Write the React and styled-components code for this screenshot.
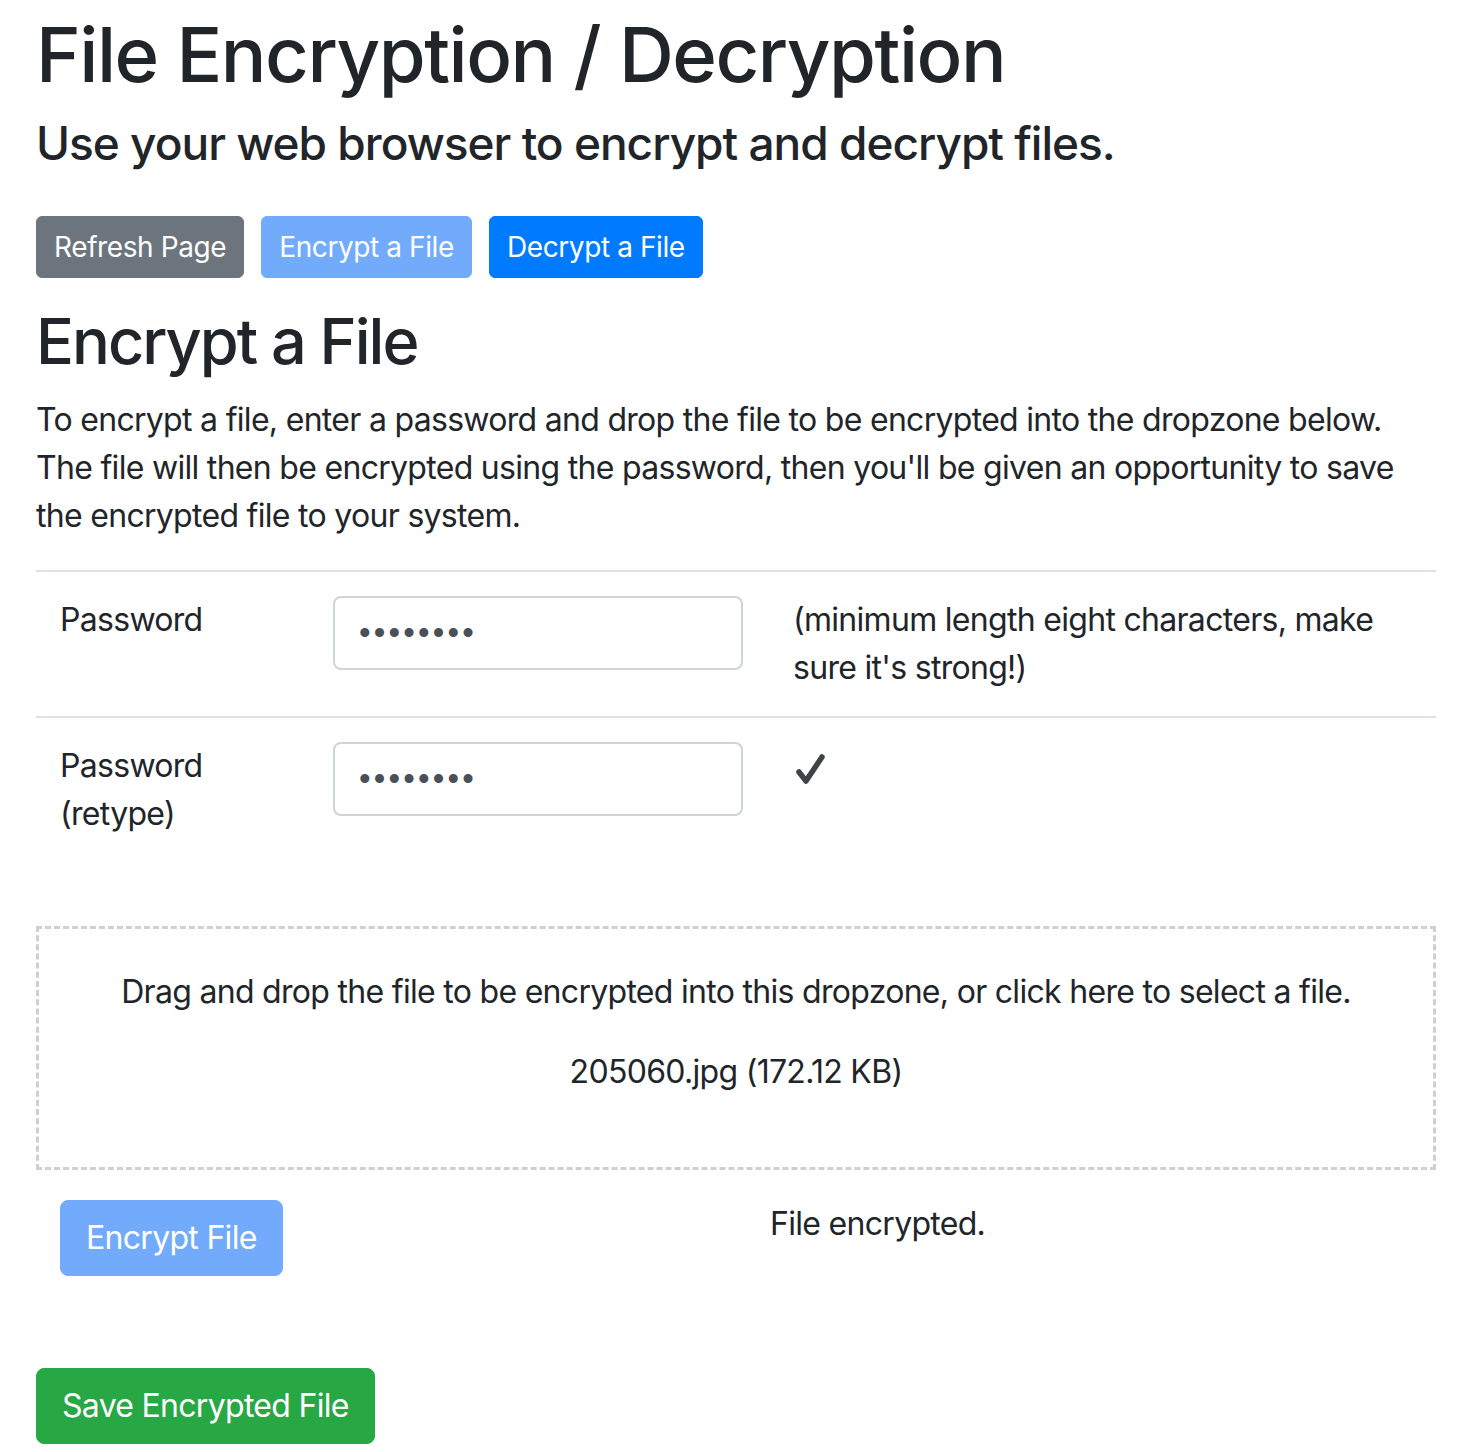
import React from 'react'
import styled, { createGlobalStyle } from 'styled-components'

const GlobalStyle = createGlobalStyle`
  * { box-sizing: border-box; }
  body {
    margin: 0;
    font-family: Inter, "Noto Sans", sans-serif;
    font-size: 32px;
    line-height: 1.5;
    color: #212529;
    background: #fff;
  }
`

const Page = styled.main`
  padding: 9px 48px 8px 36px;
`

const Title = styled.h1`
  margin: 0 0 16px;
  font-size: 76px;
  font-weight: 500;
  line-height: 1.2;
  letter-spacing: -1.5px;
`

const Subtitle = styled.h4`
  margin: 0 0 45px;
  font-size: 46px;
  font-weight: 500;
  line-height: 1.2;
  letter-spacing: -1px;
`

const Toolbar = styled.div`
  display: flex;
  gap: 17px;
  margin-bottom: 26px;
`

const colors = {
  secondary: '#6c757d',
  primary: '#007bff',
  faded: '#72abfb',
  success: '#28a745',
}

const Button = styled.button`
  font-family: inherit;
  color: #fff;
  background: ${(p) => colors[p.$variant]};
  border: 1px solid ${(p) => colors[p.$variant]};
  border-radius: ${(p) => (p.$small ? '6px' : '8px')};
  font-size: ${(p) => (p.$small ? '28px' : '32px')};
  line-height: ${(p) => (p.$small ? '42px' : '48px')};
  padding: ${(p) => (p.$small ? '9px 17px' : '13px 25px')};
  letter-spacing: ${(p) => (p.$small ? '-0.4px' : '-0.7px')};
  cursor: pointer;
`

const SectionTitle = styled.h2`
  margin: 0 0 16px;
  font-size: 63px;
  font-weight: 500;
  line-height: 1.2;
  letter-spacing: -2px;
`

const Intro = styled.p`
  margin: 0 0 30px;
  letter-spacing: -0.7px;
`

const FormTable = styled.div`
  margin-bottom: 64px;
  border-top: 2px solid #dee2e6;
`

const FormRow = styled.div`
  display: grid;
  grid-template-columns: 273px 460px 1fr;
  & + & {
    border-top: 2px solid #dee2e6;
  }
`

const Cell = styled.div`
  padding: 24px;
  letter-spacing: -0.7px;
`

const Input = styled.input`
  display: block;
  width: 410px;
  height: 74px;
  padding: 12px 24px;
  font-family: "Liberation Sans", Arial, sans-serif;
  font-size: 33px;
  letter-spacing: 3.2px;
  color: #495057;
  border: 2px solid #ced4da;
  border-radius: 8px;
  outline: none;
`

const Check = styled.svg`
  display: block;
  margin-top: 12px;
  margin-left: 2px;
`

const Dropzone = styled.div`
  border: 3px dashed #cfcfcf;
  padding: 39px 40px;
  text-align: center;
  cursor: pointer;
  p {
    margin: 0 0 32px;
    letter-spacing: -0.7px;
  }
`

const ActionRow = styled.div`
  display: grid;
  grid-template-columns: 710px 1fr;
  padding: 30px 24px 0;
  margin-bottom: 92px;
`

const Status = styled.div`
  letter-spacing: -0.7px;
`

export default function App() {
  return (
    <>
      <GlobalStyle />
      <Page>
        <Title>File Encryption / Decryption</Title>
        <Subtitle>Use your web browser to encrypt and decrypt files.</Subtitle>
        <Toolbar>
          <Button $small $variant="secondary">Refresh Page</Button>
          <Button $small $variant="faded">Encrypt a File</Button>
          <Button $small $variant="primary">Decrypt a File</Button>
        </Toolbar>
        <SectionTitle>Encrypt a File</SectionTitle>
        <Intro>
          To encrypt a file, enter a password and drop the file to be encrypted into the dropzone below.
          The file will then be encrypted using the password, then you'll be given an opportunity to save
          the encrypted file to your system.
        </Intro>
        <FormTable>
          <FormRow>
            <Cell>Password</Cell>
            <Cell>
              <Input type="password" defaultValue="12345678" readOnly />
            </Cell>
            <Cell>(minimum length eight characters, make sure it's strong!)</Cell>
          </FormRow>
          <FormRow>
            <Cell>Password<br />(retype)</Cell>
            <Cell>
              <Input type="password" defaultValue="12345678" readOnly />
            </Cell>
            <Cell>
              <Check width="30" height="30" viewBox="0 0 30 30">
                <path d="M4 18 L11 27 L27 3" fill="none" stroke="#3f4246" strokeWidth="5.5" strokeLinecap="round" strokeLinejoin="round" />
              </Check>
            </Cell>
          </FormRow>
        </FormTable>
        <Dropzone>
          <p>Drag and drop the file to be encrypted into this dropzone, or click here to select a file.</p>
          <p>205060.jpg (172.12 KB)</p>
        </Dropzone>
        <ActionRow>
          <div>
            <Button $variant="faded">Encrypt File</Button>
          </div>
          <Status>File encrypted.</Status>
        </ActionRow>
        <Button $variant="success">Save Encrypted File</Button>
      </Page>
    </>
  )
}
